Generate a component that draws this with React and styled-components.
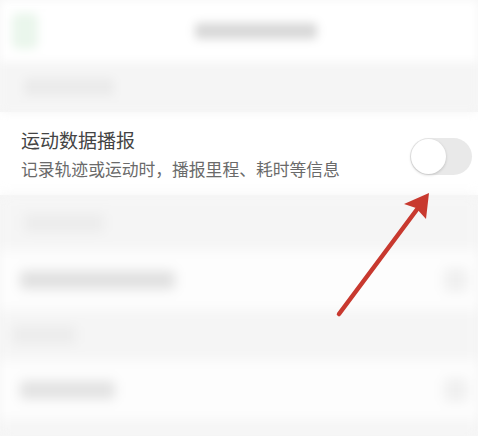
import styled, { createGlobalStyle } from "styled-components";

const GlobalStyle = createGlobalStyle`
  html, body {
    margin: 0;
    padding: 0;
    background: #f6f6f6;
    font-family: "Noto Sans CJK SC", "Noto Sans", sans-serif;
  }
`;

const Page = styled.div`
  position: relative;
  width: 478px;
  height: 436px;
  overflow: hidden;
  background: #f6f6f6;
`;

const Blurred = styled.div`
  filter: blur(${(p) => p.$amount || 6}px);
`;

const Header = styled.div`
  height: 62px;
  background: #ffffff;
  display: flex;
  align-items: center;
  padding: 0 12px;
`;

const BackMark = styled.div`
  width: 26px;
  height: 36px;
  background: #eaf6ec;
  border-radius: 6px;
`;

const HeaderTitle = styled.div`
  flex: 1;
  display: flex;
  justify-content: center;
  margin-left: 8px;
`;

const Bar = styled.div`
  width: ${(p) => p.$w}px;
  height: ${(p) => p.$h || 18}px;
  background: ${(p) => p.$c || "#e4e4e4"};
  border-radius: 4px;
`;

const Band = styled.div`
  height: ${(p) => p.$h}px;
  background: #f5f5f5;
  display: flex;
  align-items: center;
  padding-left: ${(p) => p.$pad || 24}px;
`;

const BlurRow = styled.div`
  height: ${(p) => p.$h}px;
  background: #fdfdfd;
  display: flex;
  align-items: center;
  justify-content: space-between;
  padding: 0 10px 0 20px;
`;

const SettingRow = styled.div`
  height: 83px;
  background: #ffffff;
  display: flex;
  align-items: center;
  justify-content: space-between;
  padding: 0 6px 0 21px;
`;

const Texts = styled.div`
  display: flex;
  flex-direction: column;
  gap: 6px;
`;

const Title = styled.div`
  font-size: 19px;
  line-height: 24px;
  color: #444444;
`;

const Subtitle = styled.div`
  font-size: 16.8px;
  line-height: 22px;
  color: #6a6a6a;
`;

const Toggle = styled.div`
  width: 62px;
  height: 37px;
  border-radius: 19px;
  background: #e9e9e9;
  display: flex;
  align-items: center;
  padding: 0 1px;
  box-sizing: border-box;
  margin-top: 5px;
`;

const Knob = styled.div`
  width: 35px;
  height: 35px;
  border-radius: 50%;
  background: #ffffff;
  box-shadow: 0 1px 3px rgba(0, 0, 0, 0.18);
`;

const Arrow = styled.svg`
  position: absolute;
  left: 0;
  top: 0;
  pointer-events: none;
`;

export default function App() {
  return (
    <>
      <GlobalStyle />
      <Page>
        <Blurred $amount={5}>
          <Header>
            <BackMark />
            <HeaderTitle>
              <Bar $w={122} $h={16} $c="#d8d8d8" />
            </HeaderTitle>
          </Header>
          <Band $h={50}>
            <Bar $w={90} $h={18} $c="#ebebeb" />
          </Band>
        </Blurred>
        <SettingRow>
          <Texts>
            <Title>运动数据播报</Title>
            <Subtitle>记录轨迹或运动时，播报里程、耗时等信息</Subtitle>
          </Texts>
          <Toggle>
            <Knob />
          </Toggle>
        </SettingRow>
        <Blurred $amount={6}>
          <Band $h={55}>
            <Bar $w={80} $h={18} $c="#ececec" />
          </Band>
          <BlurRow $h={60}>
            <Bar $w={155} $h={18} $c="#e0e0e0" />
            <Bar $w={24} $h={24} $c="#f0f0f0" />
          </BlurRow>
          <Band $h={50} $pad={12}>
            <Bar $w={64} $h={18} $c="#ececec" />
          </Band>
          <BlurRow $h={60}>
            <Bar $w={95} $h={18} $c="#e2e2e2" />
            <Bar $w={24} $h={24} $c="#f0f0f0" />
          </BlurRow>
          <Band $h={20} />
        </Blurred>
        <Arrow width="478" height="436" viewBox="0 0 478 436">
          <line
            x1="339"
            y1="314"
            x2="424"
            y2="200"
            stroke="#c8392f"
            strokeWidth="4.5"
            strokeLinecap="round"
          />
          <polygon points="429,193 404,204 416,208 426,219" fill="#c8392f" />
        </Arrow>
      </Page>
    </>
  );
}
